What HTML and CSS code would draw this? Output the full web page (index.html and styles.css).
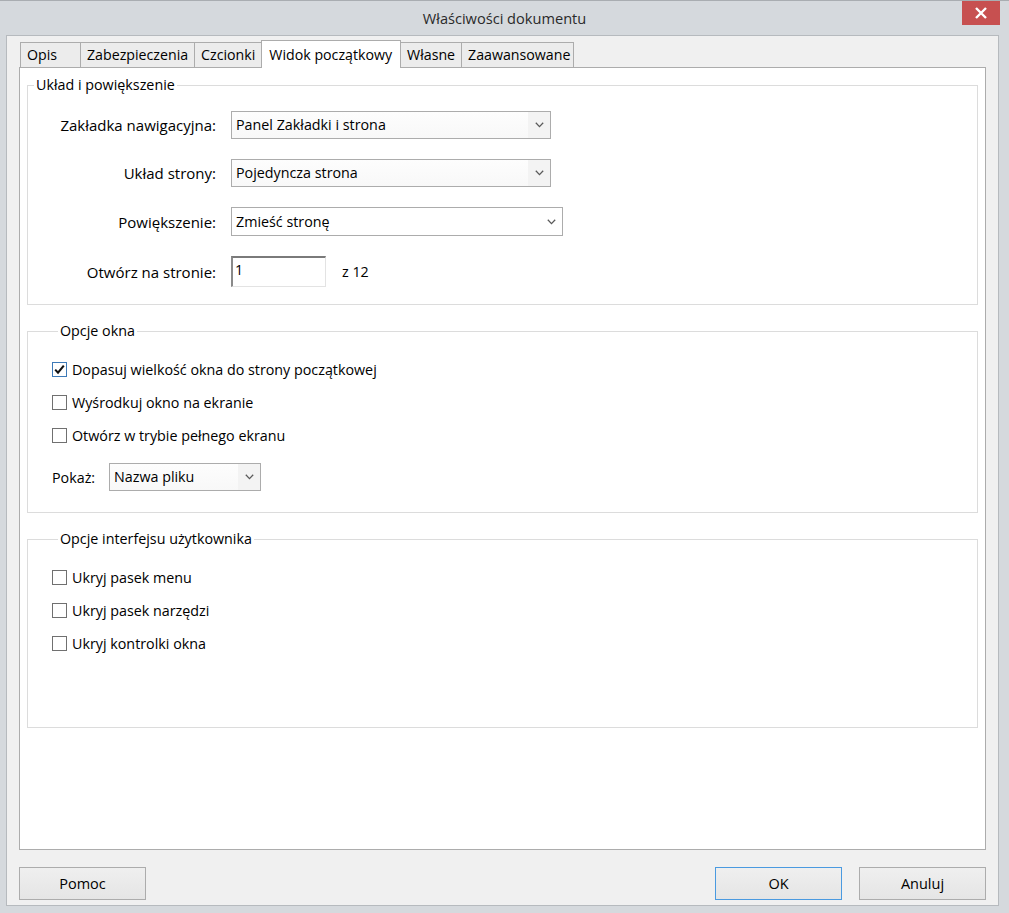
FILE: index.html
```html
<!DOCTYPE html>
<html lang="pl">
<head>
<meta charset="utf-8">
<title>Właściwości dokumentu</title>
<link rel="stylesheet" href="styles.css">
</head>
<body>
<div class="window">
  <div class="titlebar">
    <div class="title">Właściwości dokumentu</div>
    <button class="close" aria-label="Zamknij">
      <svg width="14" height="12" viewBox="0 0 14 12"><path d="M2 1 L12 11 M12 1 L2 11" stroke="#fff" stroke-width="2.4" fill="none"/></svg>
    </button>
  </div>
  <div class="client">
    <div class="tabs">
      <div class="tab">Opis</div>
      <div class="tab">Zabezpieczenia</div>
      <div class="tab">Czcionki</div>
      <div class="tab active">Widok początkowy</div>
      <div class="tab">Własne</div>
      <div class="tab">Zaawansowane</div>
    </div>
    <div class="panel">
      <fieldset class="group g1">
        <legend>Układ i powiększenie</legend>
        <div class="form-grid">
          <span class="lbl">Zakładka nawigacyjna:</span>
          <div class="select split w320"><span class="val">Panel Zakładki i strona</span><span class="arrow"><svg width="9" height="6" viewBox="0 0 9 6"><path d="M0.8 0.8 L4.5 4.6 L8.2 0.8" stroke="#5a5a5a" stroke-width="1.3" fill="none"/></svg></span></div>
          <span class="lbl">Układ strony:</span>
          <div class="select split w320"><span class="val">Pojedyncza strona</span><span class="arrow"><svg width="9" height="6" viewBox="0 0 9 6"><path d="M0.8 0.8 L4.5 4.6 L8.2 0.8" stroke="#5a5a5a" stroke-width="1.3" fill="none"/></svg></span></div>
          <span class="lbl">Powiększenie:</span>
          <div class="select plain w331"><span class="val">Zmieść stronę</span><span class="arrow"><svg width="9" height="6" viewBox="0 0 9 6"><path d="M0.8 0.8 L4.5 4.6 L8.2 0.8" stroke="#5a5a5a" stroke-width="1.3" fill="none"/></svg></span></div>
          <span class="lbl">Otwórz na stronie:</span>
          <div class="page-row"><div class="textbox">1</div><span class="of">z 12</span></div>
        </div>
      </fieldset>

      <fieldset class="group g2">
        <legend>Opcje okna</legend>
        <div class="checks">
          <div class="check-row"><span class="box checked"><svg width="13" height="13" viewBox="0 0 13 13"><path d="M2.2 6.6 L5 9.6 L10.8 2.6" stroke="#111" stroke-width="2.1" fill="none"/></svg></span><span>Dopasuj wielkość okna do strony początkowej</span></div>
          <div class="check-row"><span class="box"></span><span>Wyśrodkuj okno na ekranie</span></div>
          <div class="check-row"><span class="box"></span><span>Otwórz w trybie pełnego ekranu</span></div>
        </div>
        <div class="show-row">
          <span class="show-label">Pokaż:</span>
          <div class="select split w152"><span class="val">Nazwa pliku</span><span class="arrow"><svg width="9" height="6" viewBox="0 0 9 6"><path d="M0.8 0.8 L4.5 4.6 L8.2 0.8" stroke="#5a5a5a" stroke-width="1.3" fill="none"/></svg></span></div>
        </div>
      </fieldset>

      <fieldset class="group g3">
        <legend>Opcje interfejsu użytkownika</legend>
        <div class="checks">
          <div class="check-row"><span class="box"></span><span>Ukryj pasek menu</span></div>
          <div class="check-row"><span class="box"></span><span>Ukryj pasek narzędzi</span></div>
          <div class="check-row"><span class="box"></span><span>Ukryj kontrolki okna</span></div>
        </div>
      </fieldset>
    </div>
    <div class="buttons">
      <button class="btn">Pomoc</button>
      <span class="spacer"></span>
      <button class="btn default">OK</button>
      <button class="btn">Anuluj</button>
    </div>
  </div>
</div>
</body>
</html>
```

FILE: styles.css
```css
* { box-sizing: border-box; }
html, body { margin: 0; padding: 0; }
body {
  width: 1009px;
  height: 913px;
  overflow: hidden;
  background: #d5d9dd;
  font-family: "Open Sans", "Noto Sans", "DejaVu Sans", sans-serif;
  font-size: 14.3px;
  color: #000;
}
.window {
  width: 1009px;
  height: 913px;
  display: flex;
  flex-direction: column;
  background: #d5d9dd;
  border-top: 1px solid #a9adb1;
}
.titlebar {
  height: 34px;
  flex: none;
  position: relative;
  display: flex;
  align-items: center;
  justify-content: center;
}
.title {
  font-size: 14.6px;
  color: #2a2a2a;
  margin-top: -1px;
}
.close {
  position: absolute;
  top: 0;
  right: 9px;
  width: 38px;
  height: 24px;
  background: #c75050;
  border: none;
  padding: 0;
  display: flex;
  align-items: center;
  justify-content: center;
}
.client {
  height: 871px;
  flex: none;
  margin: 0 10px 0 6px;
  background: #f0f0f0;
  border: 1px solid #b6babe;
  padding: 4px 12px 5px 12px;
  display: flex;
  flex-direction: column;
}
.tabs {
  height: 27px;
  flex: none;
  display: flex;
  align-items: flex-end;
  padding-left: 1px;
  position: relative;
  z-index: 1;
  font-size: 14.2px;
}
.tab {
  height: 25px;
  min-width: 61px;
  padding: 0 6px;
  line-height: 24px;
  background: #ececec;
  border: 1px solid #acacac;
  border-bottom: none;
  margin-left: -1px;
  white-space: nowrap;
}
.tab:first-child { margin-left: 0; }
.tab:last-child { padding-right: 3px; }
.tab.active {
  height: 28px;
  margin-bottom: -1px;
  background: #fff;
  padding: 0 8px 0 7px;
  line-height: 27px;
  position: relative;
  z-index: 2;
}
.panel {
  flex: 1;
  background: #fff;
  border: 1px solid #acacac;
  padding: 7px 7px 0 7px;
  display: flex;
  flex-direction: column;
}
.group {
  margin: 0;
  border: 1px solid #dcdcdc;
  min-width: 0;
}
.group legend {
  padding: 0 2px;
  margin-left: 6px;
  line-height: 20px;
  font-size: 14.3px;
}
.g1 { padding: 16px 0 17px 0; }
.g2 { padding: 17px 0 21px 24px; margin-top: 16px; }
.g3 { padding: 17px 0 73px 24px; margin-top: 16px; }

.form-grid {
  display: grid;
  grid-template-columns: 188px auto;
  column-gap: 15px;
  row-gap: 20px;
  align-items: center;
  justify-items: start;
}
.lbl { justify-self: end; white-space: nowrap; font-size: 15px; }

.select {
  height: 28px;
  display: flex;
  align-items: center;
  border: 1px solid #acacac;
  background: linear-gradient(#fdfdfd, #f8f8f8);
  padding-left: 4px;
}
.select .val { flex: 1; white-space: nowrap; line-height: 20px; }
.select .arrow {
  width: 22px;
  height: 100%;
  display: flex;
  align-items: center;
  justify-content: center;
}
.select.split .arrow { background: #f3f3f3; }
.select.plain { background: #fff; height: 29px; }
.w320 { width: 320px; }
.w331 { width: 332px; }
.w152 { width: 152px; }

.page-row { display: flex; align-items: center; }
.textbox {
  width: 95px;
  height: 31px;
  border-style: solid;
  border-width: 2px 1px 1px 2px;
  border-color: #7a7a7a #e3e3e3 #e3e3e3 #8a8a8a;
  background: #fff;
  padding: 2px 0 0 2px;
  line-height: 20px;
}
.of { margin-left: 16px; }

.checks { display: flex; flex-direction: column; gap: 11px; }
.check-row { display: flex; align-items: center; height: 22px; gap: 5px; white-space: nowrap; }
.box {
  width: 15px;
  height: 15px;
  flex: none;
  border: 1px solid #707070;
  background: #fff;
  display: flex;
  align-items: center;
  justify-content: center;
}
.box.checked { border-color: #3d7ab8; }

.show-row { display: flex; align-items: center; margin-top: 17px; }
.show-label { width: 57px; }

.buttons {
  height: 33px;
  flex: none;
  margin-top: 17px;
  display: flex;
  gap: 17px;
}
.spacer { flex: 1; }
.btn {
  width: 127px;
  height: 33px;
  border: 1px solid #acacac;
  background: linear-gradient(#efefef, #e5e5e5);
  font-family: inherit;
  font-size: 14.5px;
  color: #000;
  padding: 0;
}
.btn.default { border-color: #4a9ae0; }
```
